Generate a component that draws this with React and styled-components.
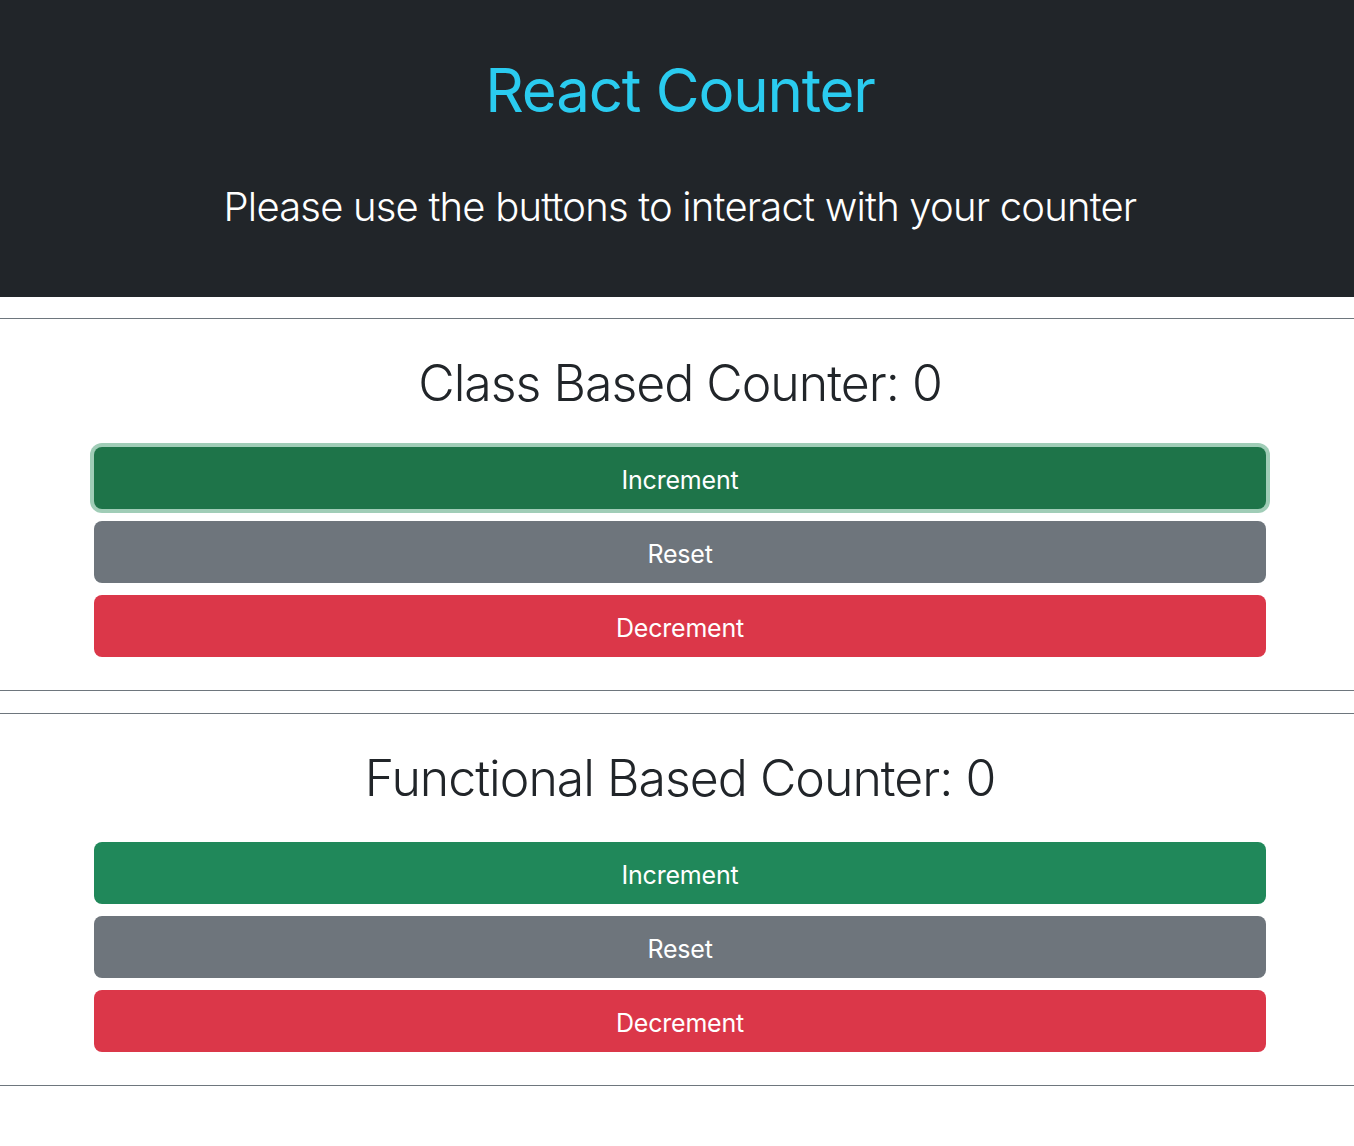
import React, { useState } from "react";
import styled, { createGlobalStyle, css } from "styled-components";

const Global = createGlobalStyle`
  html, body { margin: 0; padding: 0; background: #ffffff; }
  body {
    font-family: Inter, "Noto Sans", "Liberation Sans", sans-serif;
    color: #212529;
    -webkit-font-smoothing: antialiased;
  }
  * { box-sizing: border-box; }
`;

const Header = styled.header`
  background: #212529;
  height: 297px;
  display: flex;
  flex-direction: column;
  align-items: center;
  padding: 54px 0 0 6px;
`;

const Title = styled.h1`
  margin: 0;
  font-size: 60px;
  line-height: 1.2;
  font-weight: 400;
  color: #2acbef;
  letter-spacing: -1.2px;
`;

const Lead = styled.p`
  margin: 57px 0 0;
  font-size: 40px;
  line-height: 1.2;
  font-weight: 300;
  color: #ffffff;
  letter-spacing: -0.8px;
`;

const Rule = styled.hr`
  margin: 0;
  border: 0;
  border-top: 1px solid #6e767d;
`;

const Section = styled.section`
  display: flex;
  flex-direction: column;
  margin-top: ${(p) => p.$top}px;
`;

const SectionBody = styled.div`
  display: flex;
  flex-direction: column;
  align-items: center;
  padding: 34px 88px 33px 94px;
`;

const Heading = styled.h2`
  margin: 0 0 34px;
  font-size: 50px;
  line-height: 1.2;
  font-weight: 300;
  letter-spacing: -1px;
  color: #212529;
`;

const Buttons = styled.div`
  width: 100%;
  display: flex;
  flex-direction: column;
  gap: 12px;
`;

const variants = {
  success: css`
    background: #20885a;
  `,
  successFocus: css`
    background: #1e7449;
    box-shadow: 0 0 0 4px #a0cdb7;
  `,
  secondary: css`
    background: #6e757c;
  `,
  danger: css`
    background: #db3749;
  `,
};

const Button = styled.button`
  width: 100%;
  height: 62px;
  padding: 3px 0 0;
  border: 0;
  border-radius: 8px;
  color: #ffffff;
  font-family: inherit;
  font-size: 25px;
  font-weight: 400;
  letter-spacing: -0.2px;
  cursor: pointer;
  outline: none;
  ${(p) => variants[p.$variant]}
`;

function Counter({ label, top, focused }) {
  const [count, setCount] = useState(0);
  return (
    <Section $top={top}>
      <Rule />
      <SectionBody>
        <Heading>
          {label}: {count}
        </Heading>
        <Buttons>
          <Button $variant={focused ? "successFocus" : "success"} onClick={() => setCount(count + 1)}>
            Increment
          </Button>
          <Button $variant="secondary" onClick={() => setCount(0)}>
            Reset
          </Button>
          <Button $variant="danger" onClick={() => setCount(count - 1)}>
            Decrement
          </Button>
        </Buttons>
      </SectionBody>
      <Rule />
    </Section>
  );
}

export default function App() {
  return (
    <>
      <Global />
      <Header>
        <Title>React Counter</Title>
        <Lead>Please use the buttons to interact with your counter</Lead>
      </Header>
      <Counter label="Class Based Counter" top={21} focused />
      <Counter label="Functional Based Counter" top={22} />
    </>
  );
}
